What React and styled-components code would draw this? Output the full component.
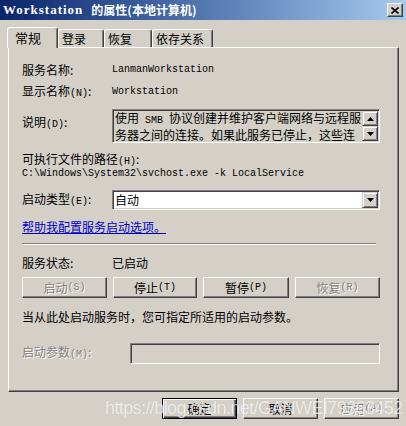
import React from "react";
import styled, { createGlobalStyle } from "styled-components";

const CJK = `"Noto Sans CJK SC", "Liberation Sans", sans-serif`;
const MONO = `"Liberation Mono", "Noto Sans CJK SC", monospace`;

const Global = createGlobalStyle`
  html, body { margin: 0; padding: 0; background: #D4D0C8; }
  body { font-family: ${CJK}; font-size: 12px; color: #000; }
`;

const Window = styled.div`
  position: relative;
  width: 406px;
  height: 426px;
  background: #D4D0C8;
  overflow: hidden;
  display: flex;
  flex-direction: column;
`;

const TitleBar = styled.div`
  box-sizing: border-box;
  height: 20px;
  padding: 0 3px 0 3px;
  display: flex;
  align-items: center;
  justify-content: space-between;
  background: linear-gradient(to right, #0A246A 0%, #3A5E9C 35%, #A6CAF0 100%);
`;

const TitleText = styled.div`
  color: #fff;
  font-weight: bold;
  font-size: 12px;
  line-height: 14px;
  white-space: nowrap;
  display: flex;
  align-items: center;
`;

const TitleLatin = styled.span`
  font-family: "Liberation Serif", serif;
  font-size: 13px;
  font-weight: bold;
  letter-spacing: 1px;
  margin-right: 8px;
`;

const CloseBtn = styled.div`
  box-sizing: border-box;
  width: 16px;
  height: 14px;
  background: #D4D0C8;
  border: 1px solid;
  border-color: #fff #404040 #404040 #fff;
  box-shadow: inset -1px -1px #808080;
  display: flex;
  align-items: center;
  justify-content: center;
`;

const TabStrip = styled.div`
  height: 20px;
  margin-top: 7px;
  padding-left: 8px;
  display: flex;
  align-items: flex-end;
  position: relative;
  z-index: 1;
`;

const Tab = styled.div`
  box-sizing: border-box;
  width: ${(p) => p.$w}px;
  height: ${(p) => (p.$active ? 21 : 18)}px;
  margin-bottom: ${(p) => (p.$active ? -1 : 0)}px;
  margin-left: ${(p) => (p.$active ? -1 : 0)}px;
  padding-left: ${(p) => (p.$active ? 7 : 3)}px;
  background: #D4D0C8;
  border-top: 1px solid #fff;
  border-left: 1px solid #fff;
  border-right: 1px solid #404040;
  border-radius: 3px 3px 0 0;
  box-shadow: inset -1px 0 #808080;
  display: flex;
  align-items: center;
  font-size: ${(p) => (p.$active ? 13 : 12)}px;
  line-height: 14px;
`;

const Panel = styled.div`
  box-sizing: border-box;
  margin-left: 8px;
  width: 391px;
  height: 345px;
  padding-left: 13px;
  border: 1px solid;
  border-color: #fff #404040 #404040 #fff;
  box-shadow: inset -1px -1px #808080;
  display: flex;
  flex-direction: column;
`;

const Row = styled.div`
  display: flex;
  align-items: ${(p) => (p.$top ? "flex-start" : "center")};
  height: ${(p) => p.$h}px;
  margin-top: ${(p) => p.$mt}px;
  line-height: 14px;
  white-space: nowrap;
  color: ${(p) => (p.$disabled ? "#808080" : "#000")};
  text-shadow: ${(p) => (p.$disabled ? "1px 1px 0 #fff" : "none")};
`;

const Label = styled.div`
  width: ${(p) => p.$w || 90}px;
  flex: none;
  padding-top: ${(p) => p.$pt || 0}px;
`;

const M = styled.span`
  font-family: ${MONO};
  font-size: 10px;
  white-space: pre;
`;

const Value = styled.div`
  font-family: ${MONO};
  font-size: 10px;
`;

const Sunken = styled.div`
  box-sizing: border-box;
  width: ${(p) => p.$w}px;
  height: ${(p) => p.$h}px;
  background: ${(p) => p.$bg || "#D4D0C8"};
  border: 1px solid;
  border-color: #808080 #fff #fff #808080;
  box-shadow: inset 1px 1px #404040, inset -1px -1px #D4D0C8;
  display: flex;
  padding: 1px;
`;

const DescText = styled.div`
  flex: 1;
  min-width: 0;
  padding-left: 1px;
  line-height: 14px;
  font-size: 12px;
  white-space: nowrap;
`;

const ScrollCol = styled.div`
  width: 16px;
  flex: none;
  display: flex;
  flex-direction: column;
`;

const SmallBtn = styled.div`
  box-sizing: border-box;
  width: 16px;
  flex: none;
  height: ${(p) => p.$h}px;
  background: #D4D0C8;
  border: 1px solid;
  border-color: #D4D0C8 #404040 #404040 #D4D0C8;
  box-shadow: inset 1px 1px #fff, inset -1px -1px #808080;
  display: flex;
  align-items: center;
  justify-content: center;
`;

const ComboText = styled.div`
  flex: 1;
  padding-left: 1px;
  display: flex;
  align-items: center;
  font-size: 12px;
`;

const Link = styled.a`
  color: #0000CC;
  text-decoration: underline;
  cursor: pointer;
`;

const Separator = styled.div`
  margin-top: 9px;
  width: 354px;
  height: 0;
  border-top: 1px solid #808080;
  border-bottom: 1px solid #fff;
`;

const ButtonRow = styled.div`
  display: flex;
  gap: ${(p) => p.$gap}px;
  margin-top: ${(p) => p.$mt}px;
  justify-content: ${(p) => p.$justify || "flex-start"};
  padding-right: ${(p) => p.$pr || 0}px;
`;

const Btn = styled.div`
  box-sizing: border-box;
  width: ${(p) => p.$w}px;
  height: 21px;
  display: flex;
  align-items: center;
  justify-content: center;
  background: #D4D0C8;
  font-size: 12px;
  line-height: 14px;
  white-space: nowrap;
  color: ${(p) => (p.$disabled ? "#808080" : "#000")};
  text-shadow: ${(p) => (p.$disabled ? "1px 1px 0 #fff" : "none")};
  border: 1px solid;
  border-color: ${(p) => (p.$default ? "#000" : "#fff #404040 #404040 #fff")};
  box-shadow: ${(p) =>
    p.$default
      ? "inset 1px 1px #fff, inset -1px -1px #404040, inset -2px -2px #808080"
      : "inset -1px -1px #808080"};
`;

const Watermark = styled.div`
  position: absolute;
  left: 105px;
  top: 398px;
  font-family: "Liberation Sans", sans-serif;
  font-size: 18px;
  letter-spacing: -0.6px;
  line-height: 20px;
  color: rgba(255, 255, 255, 0.72);
  text-shadow: 0 0 1px rgba(0, 0, 0, 0.12);
  pointer-events: none;
  white-space: nowrap;
`;

const Arrow = ({ dir }) => (
  <svg width="7" height="4" viewBox="0 0 7 4">
    {dir === "up" ? (
      <polygon points="3.5,0 7,4 0,4" fill="#000" />
    ) : (
      <polygon points="0,0 7,0 3.5,4" fill="#000" />
    )}
  </svg>
);

export default function App() {
  return (
    <>
      <Global />
      <Window>
        <TitleBar>
          <TitleText>
            <TitleLatin>Workstation</TitleLatin>的属性(本地计算机)
          </TitleText>
          <CloseBtn>
            <svg width="8" height="7" viewBox="0 0 8 7">
              <path d="M0.5 0.5 L7.5 6.5 M7.5 0.5 L0.5 6.5" stroke="#000" strokeWidth="1.6" />
            </svg>
          </CloseBtn>
        </TitleBar>

        <TabStrip>
          <Tab $active $w={51}>常规</Tab>
          <Tab $w={46}>登录</Tab>
          <Tab $w={48}>恢复</Tab>
          <Tab $w={61}>依存关系</Tab>
        </TabStrip>

        <Panel>
          <Row $mt={15} $h={14}>
            <Label>服务名称:</Label>
            <Value>LanmanWorkstation</Value>
          </Row>
          <Row $mt={8} $h={14}>
            <Label>显示名称<M>(N)</M>:</Label>
            <Value>Workstation</Value>
          </Row>
          <Row $mt={10} $h={34} $top>
            <Label $pt={6}>说明<M>(D)</M>:</Label>
            <Sunken $w={268} $h={34}>
              <DescText>
                <div>使用<M> SMB </M>协议创建并维护客户端网络与远程服</div>
                <div>务器之间的连接。如果此服务已停止，这些连</div>
              </DescText>
              <ScrollCol>
                <SmallBtn $h={15}><Arrow dir="up" /></SmallBtn>
                <SmallBtn $h={15}><Arrow dir="down" /></SmallBtn>
              </ScrollCol>
            </Sunken>
          </Row>
          <Row $mt={10} $h={14}>
            <Label $w={200}>可执行文件的路径<M>(H)</M>:</Label>
          </Row>
          <Row $mt={0} $h={14}>
            <Value>C:\Windows\System32\svchost.exe -k LocalService</Value>
          </Row>
          <Row $mt={9} $h={20}>
            <Label>启动类型<M>(E)</M>:</Label>
            <Sunken $w={268} $h={20} $bg="#fff">
              <ComboText>自动</ComboText>
              <SmallBtn $h={16}><Arrow dir="down" /></SmallBtn>
            </Sunken>
          </Row>
          <Row $mt={10} $h={14}>
            <Link>帮助我配置服务启动选项。</Link>
          </Row>
          <Separator />
          <Row $mt={11} $h={14}>
            <Label>服务状态:</Label>
            <div>已启动</div>
          </Row>
          <ButtonRow $mt={7} $gap={6}>
            <Btn $w={85} $disabled>启动<M>(S)</M></Btn>
            <Btn $w={84}>停止<M>(T)</M></Btn>
            <Btn $w={86}>暂停<M>(P)</M></Btn>
            <Btn $w={85} $disabled>恢复<M>(R)</M></Btn>
          </ButtonRow>
          <Row $mt={12} $h={14}>
            当从此处启动服务时，您可指定所适用的启动参数。
          </Row>
          <Row $mt={19} $h={21} $disabled>
            <Label $w={108}>启动参数<M>(M)</M>:</Label>
            <Sunken $w={250} $h={21} />
          </Row>
        </Panel>

        <ButtonRow $mt={6} $gap={6} $justify="flex-end" $pr={7}>
          <Btn $w={75} $default>确定</Btn>
          <Btn $w={75}>取消</Btn>
          <Btn $w={75} $disabled>应用<M>(A)</M></Btn>
        </ButtonRow>

        <Watermark>https://blog.csdn.net/GANWEI79363452</Watermark>
      </Window>
    </>
  );
}
